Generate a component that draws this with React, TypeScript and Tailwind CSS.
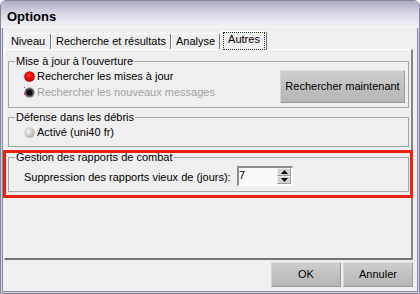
const RadioOn = () => (
  <svg width="11" height="11" viewBox="0 0 11 11" className="shrink-0">
    <defs>
      <radialGradient id="radioOn" cx="45%" cy="42%" r="58%">
        <stop offset="0" stopColor="#ff4a3a" />
        <stop offset="0.55" stopColor="#f20000" />
        <stop offset="1" stopColor="#a30000" />
      </radialGradient>
    </defs>
    <circle cx="5.5" cy="5.5" r="5.3" fill="url(#radioOn)" />
  </svg>
);

const RadioDark = () => (
  <svg width="11" height="11" viewBox="0 0 11 11" className="shrink-0">
    <circle cx="5.5" cy="5.5" r="5.2" fill="#8c8c8c" />
    <circle cx="5.5" cy="5.5" r="4" fill="#3c3c3c" />
    <circle cx="5.5" cy="5.5" r="2.6" fill="#050505" />
    <rect x="0" y="0" width="1" height="1" fill="#ff00ff" />
    <rect x="0" y="6" width="1" height="2" fill="#ff00ff" />
  </svg>
);

const RadioLight = () => (
  <svg width="11" height="11" viewBox="0 0 11 11" className="shrink-0">
    <defs>
      <radialGradient id="radioLight" cx="40%" cy="40%" r="60%">
        <stop offset="0" stopColor="#f2f2f2" />
        <stop offset="0.6" stopColor="#cfcfcf" />
        <stop offset="1" stopColor="#a9a9a9" />
      </radialGradient>
    </defs>
    <circle cx="5.5" cy="5.5" r="5.2" fill="url(#radioLight)" />
  </svg>
);

const btn =
  "flex items-center justify-center bg-linear-to-b from-[#cdcdcd] to-[#b5b5b5] border border-t-[#dedede] border-l-[#d6d6d6] border-r-[#9a9a9a] border-b-[#969696] text-black";

const tab =
  "h-[16px] flex items-center justify-center border-t border-l border-r border-t-white border-l-white border-r-[#777777] rounded-t-[2px]";

export default function App() {
  return (
    <div className="relative w-[420px] h-[294px] font-['Liberation_Sans',Arial,sans-serif] text-[11px] leading-[13px] text-black">
      <div className="flex flex-col h-full rounded-t-[6px] border border-[#84849e] overflow-hidden bg-[#efefef]">
        {/* title bar */}
        <div className="h-[27px] shrink-0 flex items-center pl-[6px] bg-linear-to-b from-[#acacc4] via-[#dadae6] to-[#f5f5f7]">
          <span className="text-[13px] font-bold leading-[13px] pt-[4px]">Options</span>
        </div>

        <div className="flex-1 flex flex-col border-x border-b border-[#d2d2de]">
          <div className="flex-1 flex flex-col border-x border-b border-[#8a8aa4]">
            {/* tabs */}
            <div className="h-[18px] mt-[3px] flex items-end pl-[2px]">
              <div className={`${tab} w-[46px]`}>Niveau</div>
              <div className={`${tab} w-[120px]`}>Recherche et résultats</div>
              <div className={`${tab} w-[49px]`}>Analyse</div>
              <div className="relative z-10 -mb-[1px] w-[47px] h-[19px] bg-[#efefef] border-t border-l border-r border-t-white border-l-white border-r-[#777777] rounded-t-[2px] pl-[2px]">
                <div className="w-[42px] h-[18px] border border-dotted border-[#1f3f1f] flex justify-center">
                  Autres
                </div>
              </div>
            </div>

            {/* tab panel */}
            <div className="h-[211px] ml-[1px] mr-[4px] flex flex-col border-t border-l border-t-white border-l-white border-r-2 border-b-2 border-r-[#858585] border-b-[#747474]">
              <fieldset className="ml-[3px] mr-[2px] mt-[5px] border border-[#a6a6a6]">
                <legend className="ml-[6px] px-[1px] leading-[13px]">Mise à jour à l'ouverture</legend>
                <div className="flex items-start justify-between pl-[15px] pr-[3px] pb-[4px]">
                  <div className="flex flex-col">
                    <div className="h-[16px] flex items-center gap-[2px]">
                      <RadioOn />
                      <span>Rechercher les mises à jour</span>
                    </div>
                    <div className="h-[16px] flex items-center gap-[2px]">
                      <RadioDark />
                      <span className="text-[#a2a2a2]">Rechercher les nouveaux messages</span>
                    </div>
                  </div>
                  <button className={`${btn} mt-[2px] w-[125px] h-[33px]`}>Rechercher maintenant</button>
                </div>
              </fieldset>

              <fieldset className="ml-[3px] mr-[2px] mt-[3px] border border-[#a6a6a6]">
                <legend className="ml-[6px] px-[1px] leading-[13px]">Défense dans les débris</legend>
                <div className="h-[16px] flex items-center gap-[2px] pl-[15px] mb-[6px]">
                  <RadioLight />
                  <span>Activé (uni40 fr)</span>
                </div>
              </fieldset>

              <fieldset className="ml-[3px] mr-[2px] mt-[4px] border border-[#a6a6a6]">
                <legend className="ml-[6px] px-[1px] leading-[13px]">Gestion des rapports de combat</legend>
                <div className="flex items-center pl-[15px] pt-[2px] pb-[5px]">
                  <span className="w-[213px] mt-[2px]">Suppression des rapports vieux de (jours):</span>
                  <div className="w-[56px] h-[20px] flex border-t-2 border-l-2 border-t-[#8c8c8c] border-l-[#8c8c8c] border-r border-b border-r-white border-b-white bg-[#fafafa]">
                    <span className="flex-1 pt-[1px]">7</span>
                    <div className="w-[14px] h-[16px] mr-[1px] flex flex-col">
                      <div className="h-[8px] flex items-center justify-center bg-[#d2d2d2] border-t border-l border-t-[#ececec] border-l-[#ececec] border-b border-r border-b-[#9a9a9a] border-r-[#9a9a9a]">
                        <svg width="7" height="4" viewBox="0 0 7 4">
                          <path d="M3.5 0 L7 4 L0 4 Z" fill="#000" />
                        </svg>
                      </div>
                      <div className="h-[8px] flex items-center justify-center bg-[#d2d2d2] border-t border-l border-t-[#ececec] border-l-[#ececec] border-b border-r border-b-[#9a9a9a] border-r-[#9a9a9a]">
                        <svg width="7" height="4" viewBox="0 0 7 4">
                          <path d="M0 0 L7 0 L3.5 4 Z" fill="#000" />
                        </svg>
                      </div>
                    </div>
                  </div>
                </div>
              </fieldset>
            </div>

            {/* dialog buttons */}
            <div className="h-[25px] mt-[2px] flex justify-end gap-[2px] pr-[4px]">
              <button className={`${btn} w-[70px]`}>OK</button>
              <button className={`${btn} w-[70px]`}>Annuler</button>
            </div>
          </div>
        </div>
      </div>

      {/* highlight annotation */}
      <div className="absolute left-[3px] top-[150px] w-[410px] h-[48px] border-[3px] border-[#e62210]" />
    </div>
  );
}
